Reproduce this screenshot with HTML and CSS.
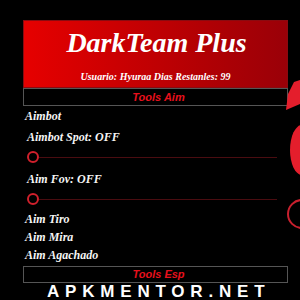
FILE: index.html
```html
<!DOCTYPE html>
<html>
<head>
<meta charset="utf-8">
<link rel="stylesheet" href="styles.css">
</head>
<body>
<div class="panel">
  <div class="header">
    <div class="title">DarkTeam Plus</div>
    <div class="subtitle">Usuario: Hyuraa Dias Restanles: 99</div>
  </div>
  <div class="section">Tools Aim</div>
  <div class="item r1">Aimbot</div>
  <div class="item sub r2">Aimbot Spot: OFF</div>
  <div class="slider"><span class="knob"></span><span class="track"></span></div>
  <div class="item sub r2 fov">Aim Fov: OFF</div>
  <div class="slider"><span class="knob"></span><span class="track"></span></div>
  <div class="item r3 tiro">Aim Tiro</div>
  <div class="item r3">Aim Mira</div>
  <div class="item r3">Aim Agachado</div>
  <div class="section esp">Tools Esp</div>
</div>
<div class="watermark">APKMENTOR.NET</div>
<svg class="deco" width="14" height="160" viewBox="0 0 14 160">
  <polygon points="8,2 14,0 14,24 0,30 2,14" fill="#e41e2c"/>
  <ellipse cx="16" cy="70" rx="12" ry="25" fill="#e41e2c"/>
  <circle cx="16" cy="134" r="14" fill="none" stroke="#c8202e" stroke-width="2"/>
</svg>
</body>
</html>
```
FILE: styles.css
```css
html, body {
  margin: 0;
  padding: 0;
  background: #000;
  width: 300px;
  height: 300px;
  overflow: hidden;
}
body {
  position: relative;
  font-family: "Liberation Serif", "DejaVu Serif", serif;
  color: #f5f5f5;
}
.panel {
  margin-left: 23px;
  padding-top: 20px;
  width: 265px;
}
.header {
  height: 68px;
  box-sizing: border-box;
  background: linear-gradient(to right, #e60000, #b00004 70%, #9a0008);
  border: 1px solid #8a0a10;
  display: flex;
  flex-direction: column;
  align-items: center;
}
.title {
  margin-top: 6px;
  margin-left: 2px;
  font-size: 28px;
  line-height: 32px;
  font-weight: bold;
  font-style: italic;
  color: #fff;
}
.subtitle {
  margin-top: 12px;
  margin-left: 0;
  font-size: 10px;
  line-height: 12px;
  font-weight: bold;
  font-style: italic;
  color: #fff;
}
.section {
  height: 18px;
  box-sizing: border-box;
  border: 1px solid #555;
  text-align: center;
  font-family: "Liberation Sans", Arial, sans-serif;
  font-size: 11px;
  line-height: 16px;
  font-weight: bold;
  font-style: italic;
  color: #e8101c;
  padding-left: 6px;
}
.section.esp {
  margin-top: 2px;
  height: 17px;
  line-height: 15px;
  padding-left: 6px;
}
.item {
  font-size: 12px;
  font-weight: bold;
  font-style: italic;
  padding-left: 2px;
}
.item.sub {
  padding-left: 4px;
}
.r1 { height: 20px; line-height: 20px; }
.r2 { height: 22px; line-height: 22px; }
.r3 { height: 18px; line-height: 18px; }
.fov { margin-top: 2px; }
.tiro { margin-top: 2px; }
.slider {
  height: 18px;
  display: flex;
  align-items: center;
  padding-left: 4px;
}
.knob {
  width: 8px;
  height: 8px;
  border: 2px solid #d0202c;
  border-radius: 50%;
  flex: none;
}
.track {
  width: 238px;
  height: 1px;
  background: #4a0c10;
}
.watermark {
  height: 18px;
  line-height: 18px;
  padding-left: 47px;
  font-family: "Liberation Sans", Arial, sans-serif;
  font-size: 17px;
  font-weight: bold;
  letter-spacing: 5.8px;
  color: #fff;
}
.deco {
  position: absolute;
  right: 0;
  top: 80px;
}
```
